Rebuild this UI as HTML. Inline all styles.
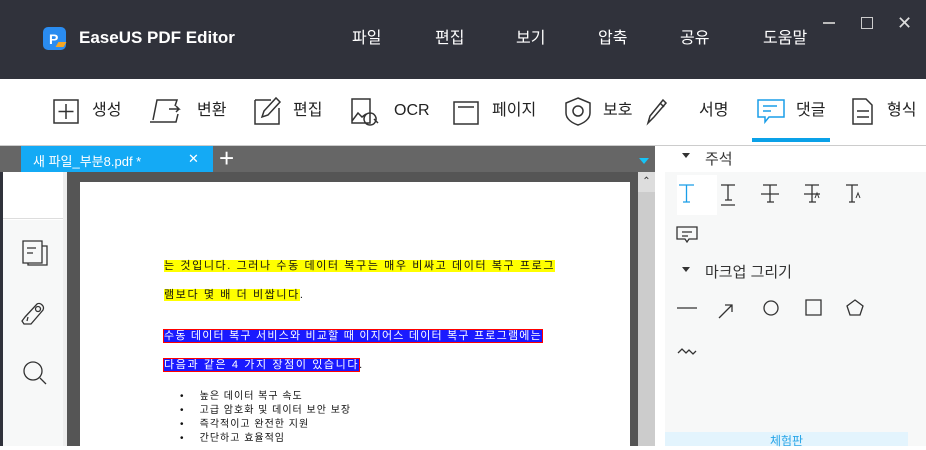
<!DOCTYPE html>
<html><head><meta charset="utf-8"><style>
*{margin:0;padding:0;box-sizing:border-box}
body{width:926px;height:446px;overflow:hidden;position:relative;background:#fff;font-family:"Liberation Sans","Noto Sans CJK KR",sans-serif}
.abs{position:absolute}
.title{left:0;top:0;width:926px;height:79px;background:#30323b;color:#fff}
.menu{top:28px;font-size:16px;color:#fff;line-height:22px}
.tb{top:79px;left:0;width:926px;height:67px;background:#fff;border-bottom:1px solid #ccc}
.ti{position:absolute;top:100px;font-size:16px;color:#222;line-height:22px}
svg{position:absolute;overflow:visible}
.hl{background:#ffff00}
.bl{background:#1a1aff;color:#fff;outline:1px solid #f00}
.pt{position:absolute;left:164px;font-size:11px;color:#111;letter-spacing:1.6px;white-space:nowrap}
</style></head><body>
<div class="abs title">
 <div class="abs" style="left:43px;top:27px;width:23px;height:23px;border-radius:5px;background:#2a8cf0"></div>
 <div class="abs" style="left:49px;top:31px;font-size:14px;font-weight:bold;color:#fff">P</div>
 <div class="abs" style="left:57px;top:42px;width:8px;height:5px;background:#f5a623;transform:skewX(-30deg)"></div>
 <div class="abs" style="left:79px;top:28px;font-size:17px;font-weight:bold">EaseUS PDF Editor</div>
 <div class="abs menu" style="left:352px">파일</div>
 <div class="abs menu" style="left:435px">편집</div>
 <div class="abs menu" style="left:516px">보기</div>
 <div class="abs menu" style="left:598px">압축</div>
 <div class="abs menu" style="left:680px">공유</div>
 <div class="abs menu" style="left:763px">도움말</div>
 <div class="abs" style="left:823px;top:22px;width:12px;height:2px;background:#bbb"></div>
 <div class="abs" style="left:861px;top:17px;width:12px;height:12px;border:1px solid #ccc"></div>
 <div class="abs" style="left:897px;top:13px;font-size:18px;color:#ddd">✕</div>
</div>
<div class="abs tb"></div>
<svg width="926" height="67" style="left:0;top:79px" fill="none" stroke="#333" stroke-width="1.5">
 <rect x="54" y="21" width="24" height="23"/><path d="M66 25v15M58.5 32.5h15"/>
 <path d="M153 41l4-20h20l-2 6M150 43h26l2-8M169 30h10l-3-3M179 30l-3 3"/>
 <path d="M255 21h16M255 21v24h24v-16M262 38l2-6 12-13 4 4-12 13z"/>
 <path d="M352 20h18v24h-18zM352 42l6-8 4 4 4-3M370 34a6 6 0 1 0 .1 0M374 40l4 4"/>
 <path d="M454 23h24v22h-24zM458 28h16"/>
 <path d="M578 19l12 5v10c0 6-6 10-12 12-6-2-12-6-12-12V24z"/><circle cx="578" cy="32" r="5"/>
 <path d="M663 21l3 3-12 14-6 6 2-7zM660 24l4 4"/>
 <path d="M758 21h26v17h-15l-4 5v-5h-7z" stroke="#1a9ee8"/><path d="M763 27h14M763 32h8" stroke="#1a9ee8"/>
 <path d="M853 20h13l6 6v19h-19zM857 32h12M857 38h12"/>
</svg>
<div class="ti" style="left:92px">생성</div>
<div class="ti" style="left:197px">변환</div>
<div class="ti" style="left:293px">편집</div>
<div class="ti" style="left:394px">OCR</div>
<div class="ti" style="left:492px">페이지</div>
<div class="ti" style="left:603px">보호</div>
<div class="ti" style="left:699px">서명</div>
<div class="ti" style="left:796px">댓글</div>
<div class="ti" style="left:887px">형식</div>
<div class="abs" style="left:752px;top:138px;width:78px;height:4px;background:#0aa1e8"></div>
<div class="abs" style="left:0;top:146px;width:655px;height:27px;background:#666"></div>
<div class="abs" style="left:21px;top:146px;width:192px;height:26px;background:#14aaf5;color:#fff;font-size:13px;padding:5px 12px">새 파일_부분8.pdf *<span style="position:absolute;left:167px;top:5px">✕</span></div>
<div class="abs" style="left:219px;top:143px;color:#fff;font-size:26px">+</div>
<div class="abs" style="left:639px;top:158px;border:5px solid transparent;border-top:6px solid #17c3f5"></div>
<div class="abs" style="left:0;top:172px;width:3px;height:274px;background:#30323b"></div>
<div class="abs" style="left:3px;top:172px;width:60px;height:47px;background:#fff;border-bottom:1px solid #ddd"></div>
<div class="abs" style="left:3px;top:220px;width:60px;height:226px;background:#f7f8f8"></div>
<div class="abs" style="left:63px;top:172px;width:4px;height:274px;background:#eee"></div>
<svg width="60" height="240" style="left:0;top:172px" fill="none" stroke="#333" stroke-width="1.3">
 <path d="M23 69h19v22h-19zM42 74h5v19h-19v-2M27 76h9M27 81h6"/>
 <path d="M25 145l12-13c3-2 8 2 6 6l-12 14h-7l-2-3zM28 145l-1 4"/><circle cx="38" cy="137" r="2.5"/>
 <circle cx="33" cy="199" r="9"/><path d="M40 206l6 6"/>
</svg>
<div class="abs" style="left:67px;top:172px;width:571px;height:274px;background:#555"></div>
<div class="abs" style="left:80px;top:182px;width:550px;height:264px;background:#fff"></div>
<div class="abs" style="left:638px;top:172px;width:17px;height:274px;background:#ccc"></div>
<div class="abs" style="left:638px;top:172px;width:17px;height:20px;background:#ddd;color:#333;font-size:10px;text-align:center;line-height:20px">⌃</div>
<div class="pt" style="top:257px"><span class="hl">는 것입니다. 그러나 수동 데이터 복구는 매우 비싸고 데이터 복구 프로그</span></div>
<div class="pt" style="top:286px"><span class="hl">램보다 몇 배 더 비쌉니다</span>.</div>
<div class="pt" style="top:327px;letter-spacing:1.2px"><span class="bl">수동 데이터 복구 서비스와 비교할 때 이지어스 데이터 복구 프로그램에는</span></div>
<div class="pt" style="top:356px"><span class="bl">다음과 같은 4 가지 장점이 있습니다</span>.</div>
<div class="pt" style="left:180px;top:390px;line-height:14px;font-size:10px;letter-spacing:1px">•&nbsp;&nbsp;&nbsp; 높은 데이터 복구 속도<br>•&nbsp;&nbsp;&nbsp; 고급 암호화 및 데이터 보안 보장<br>•&nbsp;&nbsp;&nbsp; 즉각적이고 완전한 지원<br>•&nbsp;&nbsp;&nbsp; 간단하고 효율적임</div>
<div class="abs" style="left:655px;top:146px;width:271px;height:300px;background:#fff"></div>
<div class="abs" style="left:665px;top:172px;width:261px;height:274px;background:#f7f8f8"></div>
<div class="abs" style="left:682px;top:153px;border:4px solid transparent;border-top:5px solid #333"></div>
<div class="abs" style="left:705px;top:148px;font-size:15px;color:#333">주석</div>
<div class="abs" style="left:677px;top:175px;width:40px;height:40px;background:#fff"></div>
<svg width="270" height="200" style="left:655px;top:170px" fill="none" stroke="#333" stroke-width="1.3">
 <path d="M24 15h15M31.5 15v17M28 32h7" stroke="#1a9ee8"/>
 <path d="M66 15h14M73 15v15M70 30h7M66 35h14"/>
 <path d="M108 15h14M115 15v17M112 32h7M106 24h18"/>
 <path d="M150 15h14M157 15v17M154 32h7M149 24h16"/>
 <path d="M191 15h12M197 15v17M194 32h6"/>
 <path d="M160 28l2-5 2 5M201 28l2-5 2 5" stroke-width="1"/>
 <path d="M22 57h20v12h-8l-2 3-2-3h-8zM27 62h10M27 66h6"/>
 <path d="M22 138h20M64 148l13-13M70 135h7v7"/>
 <circle cx="116" cy="138" r="7"/><path d="M151 130h15v15h-15zM200 130l8 6-3 9h-10l-3-9z"/>
 <path d="M23 183l4-4 4 4 3-3 4 4 3-3"/>
</svg>
<div class="abs" style="left:682px;top:267px;border:4px solid transparent;border-top:5px solid #333"></div>
<div class="abs" style="left:705px;top:261px;font-size:15px;color:#333">마크업 그리기</div>
<div class="abs" style="left:665px;top:432px;width:243px;height:14px;background:#e3f4fd;color:#2aa6e8;font-size:12px;text-align:center;line-height:18px">체험판</div>
</body></html>
